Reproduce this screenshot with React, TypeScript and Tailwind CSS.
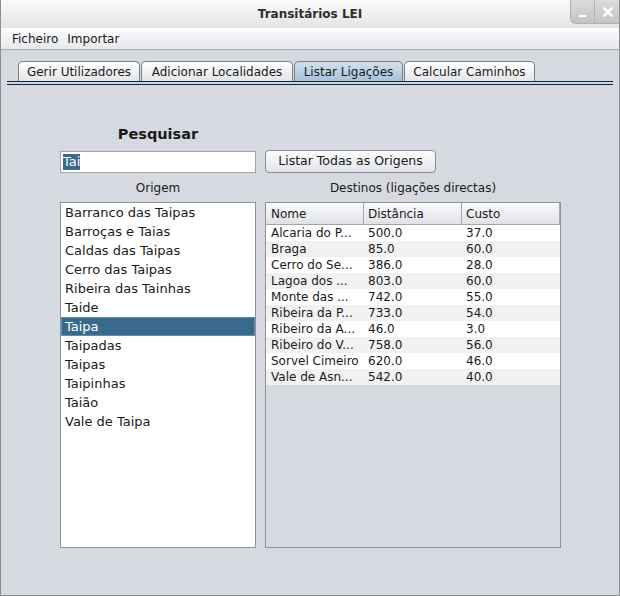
import React from 'react';

const origens = [
  'Barranco das Taipas',
  'Barroças e Taias',
  'Caldas das Taipas',
  'Cerro das Taipas',
  'Ribeira das Tainhas',
  'Taide',
  'Taipa',
  'Taipadas',
  'Taipas',
  'Taipinhas',
  'Taião',
  'Vale de Taipa',
];

const destinos = [
  ['Alcaria do P...', '500.0', '37.0'],
  ['Braga', '85.0', '60.0'],
  ['Cerro do Se...', '386.0', '28.0'],
  ['Lagoa dos ...', '803.0', '60.0'],
  ['Monte das ...', '742.0', '55.0'],
  ['Ribeira da P...', '733.0', '54.0'],
  ['Ribeiro da A...', '46.0', '3.0'],
  ['Ribeiro do V...', '758.0', '56.0'],
  ['Sorvel Cimeiro', '620.0', '46.0'],
  ['Vale de Asn...', '542.0', '40.0'],
];

const tabs = [
  { label: 'Gerir Utilizadores', w: 'w-[122px]' },
  { label: 'Adicionar Localidades', w: 'w-[152px]' },
  { label: 'Listar Ligações', w: 'w-[109px]', active: true },
  { label: 'Calcular Caminhos', w: 'w-[131px]' },
];

export default function App() {
  return (
    <div
      className="w-[620px] h-[596px] flex flex-col bg-[#d6d9df] border-x border-b border-[#8a8d92] overflow-hidden text-[#1a1a1a]"
      style={{ fontFamily: '"DejaVu Sans", Verdana, sans-serif' }}
    >
      {/* Title bar */}
      <div className="relative h-[28px] shrink-0 flex items-center justify-center bg-gradient-to-b from-[#fafafa] to-[#e4e4e4]">
        <span className="text-[12px] font-bold text-[#2e2e2e]">Transitários LEI</span>
        <div className="absolute right-[-1px] top-0 h-[24px] flex rounded-bl-[6px] overflow-hidden bg-gradient-to-b from-[#dcdcdc] to-[#c4c4c4] border-l border-b border-[#b0b0b0]">
          <div className="w-[24px] flex items-end justify-center pb-[6px] border-r border-[#b5b5b5]">
            <div className="w-[7px] h-[2px] bg-white" />
          </div>
          <div className="w-[25px] flex items-center justify-center">
            <svg width="10" height="10" viewBox="0 0 10 10">
              <path d="M1.5 1.5 L8.5 8.5 M8.5 1.5 L1.5 8.5" stroke="#ffffff" strokeWidth="2.4" strokeLinecap="square" />
            </svg>
          </div>
        </div>
      </div>

      {/* Menu bar */}
      <div className="h-[22px] shrink-0 flex items-center pl-[11px] gap-[9px] text-[12px] bg-gradient-to-b from-[#fbfbfc] to-[#e7e8ec] border-b border-[#a8abb1]">
        <span>Ficheiro</span>
        <span>Importar</span>
      </div>

      {/* Tabs */}
      <div className="pt-[11px] px-[6px]">
        <div className="flex pl-[11px] gap-[1px]">
          {tabs.map((t) => (
            <div
              key={t.label}
              className={`${t.w} h-[20px] flex items-center justify-center text-[12px] rounded-t-[5px] border border-b-0 border-[#7c8087] ${
                t.active
                  ? 'bg-gradient-to-b from-[#d2e0ec] to-[#a7c1d7]'
                  : 'bg-gradient-to-b from-[#ffffff] to-[#e3e5e9]'
              }`}
            >
              {t.label}
            </div>
          ))}
        </div>
        <div className="h-[4px] border-y border-[#1b2538] bg-[#c6d7e8]" />
      </div>

      {/* Content */}
      <div className="flex gap-[9px] pl-[59px] pt-[41px]">
        <div className="w-[196px] flex flex-col">
          <div className="h-[18px] flex items-center justify-center text-[14.5px] font-bold">Pesquisar</div>
          <div className="mt-[7px] h-[22px] bg-white border border-[#a0a3a9] flex items-center px-[2px] text-[13px]">
            <span className="bg-[#39698b] text-white leading-[16px]">Tai</span>
          </div>
          <div className="h-[29px] flex items-center justify-center text-[12px]">Origem</div>
          <div className="h-[346px] bg-white border border-[#8d9096] text-[13px]">
            {origens.map((o) => (
              <div
                key={o}
                className={`h-[19px] flex items-center px-[4px] ${
                  o === 'Taipa' ? 'bg-[#39698b] text-white outline outline-1 outline-[#5f8db4] -outline-offset-1' : ''
                }`}
              >
                {o}
              </div>
            ))}
          </div>
        </div>

        <div className="w-[296px] flex flex-col">
          <div className="h-[18px]" />
          <div className="mt-[6px] h-[23px] w-[171px] flex items-center justify-center rounded-[4px] border border-[#8a8d93] bg-gradient-to-b from-[#fdfdfd] to-[#e2e4e8] text-[12.5px]">
            Listar Todas as Origens
          </div>
          <div className="h-[29px] flex items-center justify-center text-[12px]">Destinos (ligações directas)</div>
          <div className="h-[346px] border border-[#8d9096] flex flex-col text-[12px]">
            <div className="h-[22px] flex bg-gradient-to-b from-[#fbfbfc] to-[#dfe1e5] border-b border-[#a3a6ac]">
              <div className="w-[98px] border-r border-[#a3a6ac] flex items-center px-[5px]">Nome</div>
              <div className="w-[98px] border-r border-[#a3a6ac] flex items-center px-[4px]">Distância</div>
              <div className="flex-1 flex items-center px-[4px] border-r border-[#a3a6ac]">Custo</div>
            </div>
            <div className="flex flex-col">
              {destinos.map((d, i) => (
                <div key={d[0]} className={`h-[16px] flex items-center ${i % 2 === 0 ? 'bg-white' : 'bg-[#f1f1f2]'}`}>
                  <div className="w-[98px] px-[5px] whitespace-nowrap overflow-hidden">{d[0]}</div>
                  <div className="w-[98px] px-[4px]">{d[1]}</div>
                  <div className="flex-1 px-[4px]">{d[2]}</div>
                </div>
              ))}
            </div>
          </div>
        </div>
      </div>
    </div>
  );
}
